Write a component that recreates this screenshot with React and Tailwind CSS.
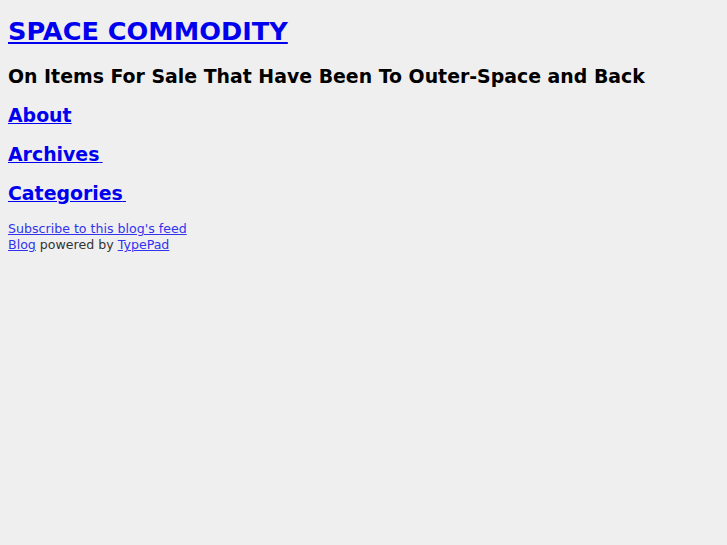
export default function App() {
  return (
    <div className="min-h-[545px] bg-[#efefef] px-2 pt-[13px] font-['DejaVu_Sans',sans-serif] text-black">
      <h1 className="text-[25.6px] font-bold leading-[36px]">
        <a href="#" className="text-[#0000ee] underline">SPACE COMMODITY</a>
      </h1>
      <h2 className="mt-[14px] text-[18.9px] font-bold leading-[26px]">
        On Items For Sale That Have Been To Outer-Space and Back
      </h2>
      <nav className="mt-[13px] flex flex-col gap-[13px] text-[18.9px] font-bold leading-[26px]">
        <a href="#" className="self-start text-[#0000ee] underline">About</a>
        <a href="#" className="self-start text-[#0000ee] underline">
          Archives<span className="text-[9px] leading-none">{"\u00a0"}</span>
        </a>
        <a href="#" className="self-start text-[#0000ee] underline">
          Categories<span className="text-[9px] leading-none">{"\u00a0"}</span>
        </a>
      </nav>
      <div className="mt-[15px] text-[12.6px] leading-[16px] text-[#333333]">
        <div>
          <a href="#" className="text-[#3333ee] underline">Subscribe to this blog's feed</a>
        </div>
        <div>
          <a href="#" className="text-[#3333ee] underline">Blog</a> powered by{" "}
          <a href="#" className="text-[#3333ee] underline">TypePad</a>
        </div>
      </div>
    </div>
  );
}
